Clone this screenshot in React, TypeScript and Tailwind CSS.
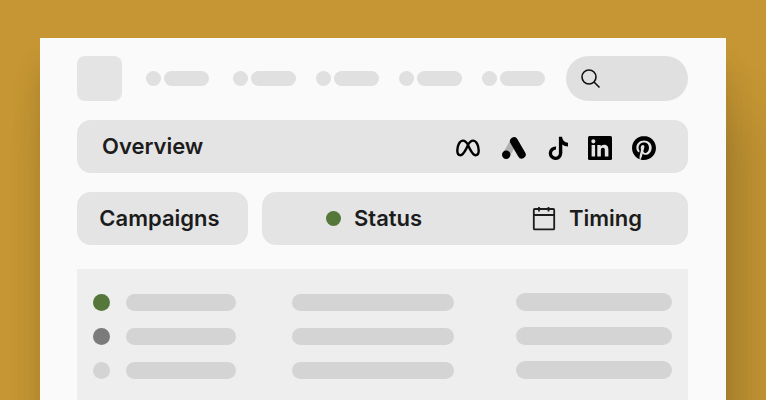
import clsx from 'clsx';

const rows = [
  { id: 'active', dot: 'bg-[#56773a]' },
  { id: 'paused', dot: 'bg-[#7b7b7b]' },
  { id: 'draft', dot: 'bg-[#d4d4d4]' },
];

export default function App() {
  return (
    <div className="min-h-screen bg-[#c59633] px-10 pt-[38px] font-['Inter',sans-serif] text-[#1c1c1c]">
      <main className="flex min-h-[calc(100vh-38px)] flex-col bg-[#fafafa] pt-[18px] pr-[38px] pl-[37px] shadow-[0_30px_24px_rgba(80,70,30,0.22),24px_76px_50px_rgba(80,70,30,0.22)]">
        <TopBar />

        <section className="mt-[19px] flex h-[53px] items-center justify-between rounded-[14px] bg-[#e4e4e4] pr-8 pl-[25px]">
          <h1 className="text-[22px] font-semibold">Overview</h1>
          <div className="flex items-center gap-5 pt-[2px]">
            <MetaIcon />
            <GoogleAdsIcon />
            <TikTokIcon />
            <LinkedInIcon />
            <PinterestIcon />
          </div>
        </section>

        <div className="mt-[19px] flex h-[53px] gap-[14px] text-[22px] font-semibold">
          <button type="button" className="w-[171px] rounded-[14px] bg-[#e4e4e4] pr-1.5">
            Campaigns
          </button>
          <div className="flex flex-1 items-center justify-between rounded-[14px] bg-[#e4e4e4] pr-[46px] pl-16">
            <button type="button" className="flex items-center gap-[13px]">
              <span className="size-[15px] rounded-full bg-[#56773a]" />
              Status
            </button>
            <button type="button" className="flex items-center gap-[13px]">
              <CalendarIcon />
              Timing
            </button>
          </div>
        </div>

        <section className="mt-6 flex flex-1 flex-col gap-4 bg-[#eeeeee] pt-6 pr-4 pl-4">
          {rows.map((row) => (
            <div key={row.id} className="grid h-[18px] grid-cols-[199fr_224fr_156fr] items-center">
              <div className="flex items-center gap-4">
                <span className={clsx('size-[17px] rounded-full', row.dot)} />
                <span className="h-[17px] w-[110px] rounded-full bg-[#d4d4d4]" />
              </div>
              <span className="h-[17px] w-[162px] rounded-full bg-[#d4d4d4]" />
              <span className="h-[18px] rounded-full bg-[#d4d4d4]" />
            </div>
          ))}
        </section>
      </main>
    </div>
  );
}

function TopBar() {
  return (
    <header className="flex items-center justify-between">
      <div className="flex items-center gap-6">
        <div className="size-[45px] rounded-lg bg-[#e4e4e4]" />
        <NavItem />
        <nav className="flex gap-5">
          <NavItem />
          <NavItem />
          <NavItem />
          <NavItem />
        </nav>
      </div>
      <label className="flex h-[45px] w-[122px] items-center gap-2 rounded-full bg-[#e0e0e0] pr-4 pl-[15px]">
        <svg className="size-5 shrink-0" viewBox="0 0 20 20" fill="none" stroke="#111" strokeWidth="1.6">
          <circle cx="8" cy="8" r="7" />
          <path d="M13 13l5.5 5.5" />
        </svg>
        <input type="search" aria-label="Search" className="w-full min-w-0 bg-transparent text-sm outline-none" />
      </label>
    </header>
  );
}

function NavItem() {
  return (
    <div className="flex gap-[3px]">
      <span className="size-[15px] rounded-full bg-[#e0e0e0]" />
      <span className="h-[15px] w-[45px] rounded-full bg-[#e0e0e0]" />
    </div>
  );
}

function CalendarIcon() {
  return (
    <svg className="size-6" viewBox="0 0 24 24" fill="none" stroke="#1c1c1c" strokeWidth="1.8">
      <rect x="1.8" y="2" width="20.4" height="20.4" rx="1" />
      <path d="M2 8h20M7 0v4.5M16.5 0v4.5" />
    </svg>
  );
}

function MetaIcon() {
  return (
    <svg className="h-[18px] w-6" viewBox="0 0 24 18" fill="none" stroke="#000" strokeWidth="2.4">
      <path d="M12 6C10.4 3 9 1.6 7 1.6C3.8 1.6 1.3 6.5 1.3 11.5C1.3 14.5 2.6 16.2 4.5 16.2C6.6 16.2 7.9 14.2 10.3 9.6L12 6C13.6 3 15 1.6 17 1.6C20.2 1.6 22.7 6.5 22.7 11.5C22.7 14.5 21.4 16.2 19.5 16.2C17.4 16.2 16.1 14.2 13.7 9.6Z" />
    </svg>
  );
}

function GoogleAdsIcon() {
  return (
    <svg className="h-6 w-[26px]" viewBox="-2 0 26 24" strokeLinecap="round">
      <path d="M4.5 18.5L11.5 6" stroke="#b0b0b0" strokeWidth="7.5" />
      <path d="M12 5.3L19.7 18.5" stroke="#000" strokeWidth="8" />
      <circle cx="4.2" cy="18.8" r="4.2" />
    </svg>
  );
}

function TikTokIcon() {
  return (
    <svg className="h-6 w-[22px]" viewBox="0 0 22 24">
      <path d="M12.9 .8h3.2c.3 3.3 2.3 5.7 5.9 6v3.7c-2.3-.1-4.2-.8-5.7-2V17h-3.4z" />
      <path fill="none" stroke="#000" strokeWidth="3.3" d="M14.6 16.5V17.3A5.1 5.1 0 1 1 10 12.2" />
    </svg>
  );
}

function LinkedInIcon() {
  return (
    <svg className="size-6" viewBox="0 0 24 24">
      <rect width="24" height="24" rx="1.5" />
      <path
        fill="#e4e4e4"
        d="M3.6 9h3.5v11.4H3.6zM5.35 3.3a2.05 2.05 0 110 4.1 2.05 2.05 0 010-4.1zM9.3 9h3.4v1.6c.5-.9 1.6-1.9 3.4-1.9 3.6 0 4.3 2.4 4.3 5.4v6.3h-3.6v-5.6c0-1.3 0-3-1.85-3-1.85 0-2.1 1.4-2.1 2.9v5.7H9.3z"
      />
    </svg>
  );
}

function PinterestIcon() {
  return (
    <svg className="size-6" viewBox="0 0 24 24">
      <path d="M12.017 0C5.396 0 .029 5.367.029 11.987c0 5.079 3.158 9.417 7.618 11.162-.105-.949-.199-2.403.041-3.439.219-.937 1.406-5.957 1.406-5.957s-.359-.72-.359-1.781c0-1.663.967-2.911 2.168-2.911 1.024 0 1.518.769 1.518 1.688 0 1.029-.653 2.567-.992 3.992-.285 1.193.6 2.165 1.775 2.165 2.128 0 3.768-2.245 3.768-5.487 0-2.861-2.063-4.869-5.008-4.869-3.41 0-5.409 2.562-5.409 5.199 0 1.033.394 2.143.889 2.741.099.12.112.225.085.345-.09.375-.293 1.199-.334 1.363-.053.225-.172.271-.401.165-1.495-.69-2.433-2.878-2.433-4.646 0-3.776 2.748-7.252 7.92-7.252 4.158 0 7.392 2.967 7.392 6.923 0 4.135-2.607 7.462-6.233 7.462-1.214 0-2.354-.629-2.758-1.379l-.749 2.848c-.269 1.045-1.004 2.352-1.498 3.146 1.123.345 2.306.535 3.55.535 6.607 0 11.985-5.365 11.985-11.987C23.97 5.39 18.592.026 11.985.026L12.017 0z" />
    </svg>
  );
}
